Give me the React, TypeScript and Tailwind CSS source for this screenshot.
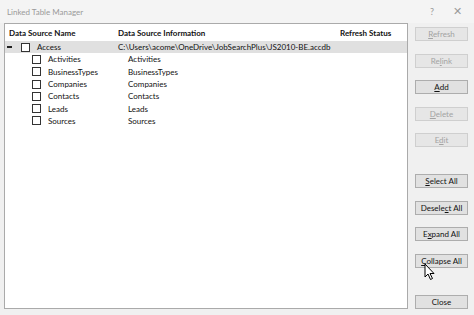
import React from 'react';

const tables = ['Activities', 'BusinessTypes', 'Companies', 'Contacts', 'Leads', 'Sources'];

const Box = () => <span className="block w-[9px] h-[9px] border border-[#333] bg-white shrink-0" />;

const Btn = ({ label, u, disabled }: { label: string; u: number; disabled?: boolean }) => (
  <div
    className={`h-[14px] w-[53px] flex items-center justify-center border text-[8px] leading-none ${
      disabled ? 'border-[#cfcfcf] bg-[#e6e6e6] text-[#a3a3a3]' : 'border-[#adadad] bg-[#e1e1e1] text-[#111]'
    }`}
  >
    {u < 0 ? (
      <span>{label}</span>
    ) : (
      <span>
        {label.slice(0, u)}
        <span className="underline underline-offset-1">{label[u]}</span>
        {label.slice(u + 1)}
      </span>
    )}
  </div>
);

export default function App() {
  return (
    <div
      className="relative w-[474px] h-[315px] bg-[#f0f0f0] overflow-hidden text-[8px] text-[#111]"
      style={{ fontFamily: 'Lato, "Open Sans", sans-serif' }}
    >
      <div className="h-[23px] flex items-center pl-[7px] bg-[#f4f4f4]">
        <span className="text-[8px] text-[#9a9a9a]">Linked Table Manager</span>
        <span className="ml-auto text-[9px] text-[#9a9a9a]">?</span>
        <span className="ml-[19px] mr-[12px] text-[11px] text-[#9a9a9a] font-light">✕</span>
      </div>

      <div className="flex">
        <div className="ml-[4px] w-[404px] h-[286px] border border-[#aaaaaa] bg-white">
          <div className="h-[17px] flex items-center font-bold">
            <div className="w-[113px] pl-[4px]">Data Source Name</div>
            <div className="w-[222px]">Data Source Information</div>
            <div>Refresh Status</div>
          </div>
          <div className="h-[12.3px] flex items-center bg-[#e0e0e0]">
            <div className="w-[113px] flex items-center pl-[2px]">
              <span className="block w-[5px] h-[1.5px] bg-[#222]" />
              <span className="ml-[9px]"><Box /></span>
              <span className="ml-[7px]">Access</span>
            </div>
            <div>C:\Users\acome\OneDrive\JobSearchPlus\JS2010-BE.accdb</div>
          </div>
          {tables.map(t => (
            <div key={t} className="h-[12.3px] flex items-center">
              <div className="w-[123px] flex items-center pl-[27px]">
                <Box />
                <span className="ml-[7px]">{t}</span>
              </div>
              <div>{t}</div>
            </div>
          ))}
        </div>

        <div className="ml-[7px] mt-[4px] flex flex-col">
          <div className="flex flex-col gap-[12.5px]">
            <Btn label="Refresh" u={0} disabled />
            <Btn label="Relink" u={2} disabled />
            <Btn label="Add" u={0} />
            <Btn label="Delete" u={0} disabled />
            <Btn label="Edit" u={1} disabled />
          </div>
          <div className="mt-[27px] flex flex-col gap-[12.5px]">
            <Btn label="Select All" u={0} />
            <Btn label="Deselect All" u={6} />
            <Btn label="Expand All" u={1} />
            <Btn label="Collapse All" u={0} />
          </div>
          <div className="mt-[27px]">
            <Btn label="Close" u={-1} />
          </div>
        </div>
      </div>

      <svg className="absolute left-[424px] top-[263px]" width="12" height="18" viewBox="0 0 12 18">
        <path d="M1 1 L1 14 L4 11 L6.5 16.5 L8.5 15.5 L6 10.5 L10 10.5 Z" fill="#fff" stroke="#000" strokeWidth="1" />
      </svg>
    </div>
  );
}
